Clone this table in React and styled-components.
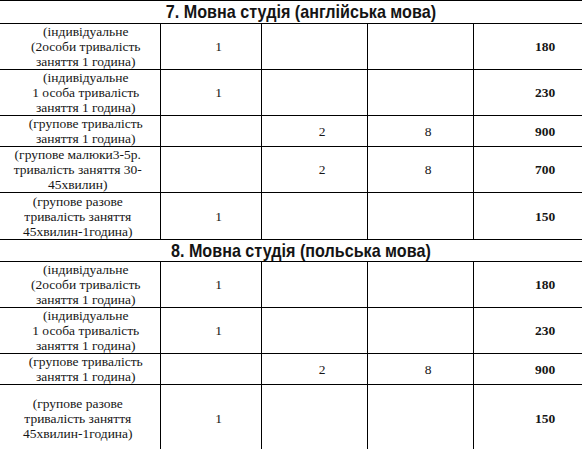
import React from "react";
import styled, { createGlobalStyle } from "styled-components";

const Global = createGlobalStyle`
  html, body { margin: 0; padding: 0; background: #fff; overflow: hidden; }
  body { width: 582px; height: 449px; }
`;

const Page = styled.div`
  width: 582px;
  height: 449px;
  overflow: hidden;
  background: #fff;
`;

const Table = styled.table`
  border-collapse: collapse;
  table-layout: fixed;
  width: 601px;
  color: #161616;
  font-family: "Liberation Serif", "Times New Roman", "DejaVu Serif", serif;
  font-size: 13.5px;
  line-height: 15px;
`;

const Row = styled.tr`
  height: ${(p) => p.$h}px;
`;

const Title = styled.td`
  border-top: 1px solid #000;
  border-bottom: 1px solid #000;
  padding: 0;
  text-align: center;
  vertical-align: middle;
  font-family: "Liberation Sans", Arial, sans-serif;
  font-weight: 700;
  font-size: 19px;
  line-height: 20px;
  color: #141414;
`;

const TitleText = styled.span`
  display: inline-block;
  transform: scaleX(0.85);
  transform-origin: center;
  white-space: nowrap;
`;

const Cell = styled.td`
  border: 1px solid #000;
  border-left: ${(p) => (p.$first ? "none" : "1px solid #000")};
  padding: 0 0 0 16px;
  text-align: center;
  vertical-align: middle;
  white-space: nowrap;
  font-weight: ${(p) => (p.$bold ? 700 : 400)};
`;

const Label = styled(Cell)`
  padding: 0 ${(p) => (p.$shift ? 0 : 4)}px 0 ${(p) => (p.$shift ? 12 : 0)}px;
`;

const sections = [
  {
    title: "7. Мовна студія (англійська мова)",
    rows: [
      { h: 46, shift: true, lines: ["(індивідуальне", "(2особи тривалість", "заняття 1 година)"], a: "1", b: "", c: "", p: "180" },
      { h: 46, shift: true, lines: ["(індивідуальне", "1 особа тривалість", "заняття 1 година)"], a: "1", b: "", c: "", p: "230" },
      { h: 31, shift: true, lines: ["(групове тривалість", "заняття 1 година)"], a: "", b: "2", c: "8", p: "900" },
      { h: 46, shift: false, lines: ["(групове малюки3-5р.", "тривалість заняття 30-", "45хвилин)"], a: "", b: "2", c: "8", p: "700" },
      { h: 47, shift: false, lines: ["(групове разове", "тривалість заняття", "45хвилин-1година)"], a: "1", b: "", c: "", p: "150" },
    ],
  },
  {
    title: "8. Мовна студія (польська мова)",
    rows: [
      { h: 46, shift: true, lines: ["(індивідуальне", "(2особи тривалість", "заняття 1 година)"], a: "1", b: "", c: "", p: "180" },
      { h: 46, shift: true, lines: ["(індивідуальне", "1 особа тривалість", "заняття 1 година)"], a: "1", b: "", c: "", p: "230" },
      { h: 31, shift: true, lines: ["(групове тривалість", "заняття 1 година)"], a: "", b: "2", c: "8", p: "900" },
      { h: 68, shift: false, lines: ["(групове разове", "тривалість заняття", "45хвилин-1година)"], a: "1", b: "", c: "", p: "150" },
    ],
  },
];

export default function App() {
  return (
    <Page>
      <Global />
      <Table>
        <colgroup>
          <col style={{ width: 160 }} />
          <col style={{ width: 101 }} />
          <col style={{ width: 106 }} />
          <col style={{ width: 106 }} />
          <col style={{ width: 128 }} />
        </colgroup>
        <tbody>
          {sections.map((s, si) => (
            <React.Fragment key={si}>
              <Row $h={si === 0 ? 23 : 22}>
                <Title colSpan={5}>
                  <TitleText>{s.title}</TitleText>
                </Title>
              </Row>
              {s.rows.map((r, ri) => (
                <Row key={ri} $h={r.h}>
                  <Label $first $shift={r.shift}>
                    {r.lines.map((l, li) => (
                      <React.Fragment key={li}>
                        {li > 0 && <br />}
                        {l}
                      </React.Fragment>
                    ))}
                  </Label>
                  <Cell>{r.a}</Cell>
                  <Cell>{r.b}</Cell>
                  <Cell>{r.c}</Cell>
                  <Cell $bold>{r.p}</Cell>
                </Row>
              ))}
            </React.Fragment>
          ))}
        </tbody>
      </Table>
    </Page>
  );
}
